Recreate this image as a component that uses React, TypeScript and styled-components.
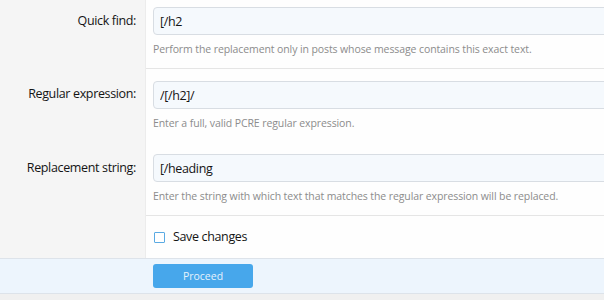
import React, { useState } from "react";
import styled, { createGlobalStyle } from "styled-components";

const GlobalStyle = createGlobalStyle`
  html, body {
    margin: 0;
    padding: 0;
    background: #f0f0f0;
    overflow: hidden;
  }
  body {
    font-family: "Open Sans", "Noto Sans", "Liberation Sans", sans-serif;
    color: #141414;
  }
`;

const Form = styled.form`
  width: 640px;
  margin-top: -5px;
  background: #fefefe;
`;

const Row = styled.dl<{ $divided?: boolean }>`
  display: flex;
  margin: 0;
  dd {
    border-top: ${(p) => (p.$divided ? "1px solid #e5e5e5" : "none")};
  }
`;

const Label = styled.dt`
  flex: 0 0 136px;
  padding: 12px 9px 0 0;
  background: #f5f5f5;
  border-right: 1px solid #ececec;
  text-align: right;
  font-size: 12.5px;
  letter-spacing: -0.35px;
  line-height: 28px;
`;

const Field = styled.dd`
  flex: 1;
  margin: 0;
  padding: 12px 10px 12px 7px;
`;

const Input = styled.input`
  box-sizing: border-box;
  display: block;
  width: 100%;
  height: 28px;
  padding: 0 6px;
  border: 1px solid #d8dde3;
  border-radius: 4px;
  background: #f5f9fd;
  font: inherit;
  font-size: 12.5px;
  letter-spacing: -0.35px;
  color: #141414;
  outline: none;
`;

const Hint = styled.div`
  margin-top: 7px;
  font-size: 10.5px;
  letter-spacing: -0.1px;
  line-height: 14px;
  color: #8c8c8c;
`;

const CheckLabel = styled.label`
  display: flex;
  align-items: center;
  gap: 8px;
  font-size: 12.5px;
  letter-spacing: -0.35px;
  line-height: 18px;
  padding-left: 1px;
`;

const Box = styled.span<{ $checked: boolean }>`
  box-sizing: border-box;
  width: 11px;
  height: 11px;
  border: 1.5px solid #5aaae3;
  border-radius: 1px;
  background: ${(p) => (p.$checked ? "#5aaae3" : "#fff")};
`;

const Footer = styled.div`
  display: flex;
  border-top: 1px solid #dde3ea;
  border-bottom: 1px solid #dde3ea;
  background: #edf5fd;
  padding: 5px 0 5px 153px;
`;

const Button = styled.button`
  width: 100px;
  height: 24px;
  border: none;
  border-radius: 3px;
  background: #47a7eb;
  color: #e6f2fc;
  font: inherit;
  font-size: 10.5px;
  cursor: pointer;
`;

export default function App() {
  const [save, setSave] = useState(false);
  const [find, setFind] = useState("[/h2");
  const [regex, setRegex] = useState("/[/h2]/");
  const [replace, setReplace] = useState("[/heading");

  return (
    <>
      <GlobalStyle />
      <Form onSubmit={(e) => e.preventDefault()}>
        <Row>
          <Label>Quick find:</Label>
          <Field>
            <Input value={find} onChange={(e) => setFind(e.target.value)} />
            <Hint>Perform the replacement only in posts whose message contains this exact text.</Hint>
          </Field>
        </Row>
        <Row $divided>
          <Label>Regular expression:</Label>
          <Field>
            <Input value={regex} onChange={(e) => setRegex(e.target.value)} />
            <Hint>Enter a full, valid PCRE regular expression.</Hint>
          </Field>
        </Row>
        <Row>
          <Label>Replacement string:</Label>
          <Field>
            <Input value={replace} onChange={(e) => setReplace(e.target.value)} />
            <Hint>Enter the string with which text that matches the regular expression will be replaced.</Hint>
          </Field>
        </Row>
        <Row $divided>
          <Label />
          <Field>
            <CheckLabel onClick={() => setSave(!save)}>
              <Box $checked={save} />
              Save changes
            </CheckLabel>
          </Field>
        </Row>
        <Footer>
          <Button type="submit">Proceed</Button>
        </Footer>
      </Form>
    </>
  );
}
